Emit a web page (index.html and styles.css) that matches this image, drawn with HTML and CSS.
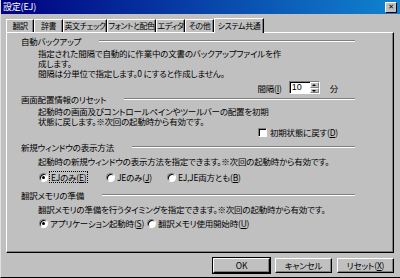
FILE: index.html
```html
<!DOCTYPE html>
<html lang="ja">
<head>
    <meta charset="UTF-8">
    <title>設定(EJ)</title>
    <link rel="stylesheet" href="styles.css">
</head>
<body>
    <div class="ventana">
        <div class="titulo">
            <span class="titulo-texto">設定(EJ)</span>
            <span class="cerrar">&#x2715;</span>
        </div>
        <div class="pestanas">
            <span class="pestana">翻訳</span>
            <span class="pestana">辞書</span>
            <span class="pestana">英文チェック</span>
            <span class="pestana">フォントと配色</span>
            <span class="pestana">エディタ</span>
            <span class="pestana">その他</span>
            <span class="pestana activa">システム共通</span>
        </div>
        <div class="panel">
            <!-- 自動バックアップ -->
            <div class="grupo g1">
                <div class="cabecera"><span>自動バックアップ</span><i class="linea"></i></div>
                <div class="texto t1">指定された間隔で自動的に作業中の文書のバックアップファイルを作<br>成します。<br>間隔は分単位で指定します。0 にすると作成しません。</div>
                <div class="fila-spin">
                    <span>間隔(<u>I</u>)</span>
                    <span class="spin"><span class="spin-valor">10</span><span class="flechas"><b class="arriba"></b><b class="abajo"></b></span></span>
                    <span class="min">分</span>
                </div>
            </div>
            <!-- 画面配置情報のリセット -->
            <div class="grupo g2">
                <div class="cabecera"><span>画面配置情報のリセット</span><i class="linea"></i></div>
                <div class="texto t2">起動時の画面及びコントロールペインやツールバーの配置を初期<br>状態に戻します。※次回の起動時から有効です。</div>
                <div class="fila-check"><span class="check"></span><span>初期状態に戻す(<u>D</u>)</span></div>
            </div>
            <!-- 新規ウィンドウの表示方法 -->
            <div class="grupo g3">
                <div class="cabecera"><span>新規ウィンドウの表示方法</span><i class="linea"></i></div>
                <div class="texto t3">起動時の新規ウィンドウの表示方法を指定できます。※次回の起動時から有効です。</div>
                <div class="radios r3">
                    <label class="radio w1"><span class="punto on"></span><span class="foco">EJのみ(<u>E</u>)</span></label>
                    <label class="radio w2"><span class="punto"></span><span>JEのみ(<u>J</u>)</span></label>
                    <label class="radio"><span class="punto"></span><span>EJ,JE両方とも(<u>B</u>)</span></label>
                </div>
            </div>
            <!-- 翻訳メモリの準備 -->
            <div class="grupo g4">
                <div class="cabecera"><span>翻訳メモリの準備</span><i class="linea"></i></div>
                <div class="texto t4">翻訳メモリの準備を行うタイミングを指定できます。※次回の起動時から有効です。</div>
                <div class="radios r4">
                    <label class="radio w3"><span class="punto on"></span><span>アプリケーション起動時(<u>S</u>)</span></label>
                    <label class="radio"><span class="punto"></span><span>翻訳メモリ使用開始時(<u>U</u>)</span></label>
                </div>
            </div>
        </div>
        <div class="botones">
            <span class="boton">OK</span>
            <span class="boton">キャンセル</span>
            <span class="boton">リセット(<u>X</u>)</span>
        </div>
    </div>
</body>
</html>
```
FILE: styles.css
```css
body {
    margin: 0;
    padding: 0;
    background-color: #c0c0c0;
}
.ventana {
    width: 400px;
    height: 278px;
    box-sizing: border-box;
    border-left: 1px solid #dfdfdf;
    border-bottom: 1px solid #000;
    background-color: #c0c0c0;
    font-family: "Noto Sans CJK JP", sans-serif;
    font-size: 8.5px;
    letter-spacing: -0.2px;
    font-feature-settings: "palt";
    color: #000;
    display: flex;
    flex-direction: column;
}
u {
    text-decoration: underline;
}
/* barra de titulo */
.titulo {
    height: 14px;
    background: linear-gradient(to right, #000080, #1084d0);
    display: flex;
    align-items: center;
    justify-content: space-between;
    padding: 0 3px 0 2px;
}
.titulo-texto {
    color: white;
    font-size: 9px;
    line-height: 12px;
}
.cerrar {
    width: 10px;
    height: 9px;
    background-color: #c0c0c0;
    border-top: 1px solid #fff;
    border-left: 1px solid #fff;
    border-right: 1px solid #000;
    border-bottom: 1px solid #000;
    font-size: 7px;
    line-height: 9px;
    text-align: center;
    font-weight: bold;
    font-family: "DejaVu Sans", sans-serif;
}
/* pestanas */
.pestanas {
    display: flex;
    margin-top: 4px;
    padding-left: 5px;
    height: 14px;
    align-items: flex-end;
}
.pestana {
    box-sizing: border-box;
    height: 13px;
    line-height: 12px;
    font-size: 8px;
    letter-spacing: -0.4px;
    border-top: 1px solid #fff;
    border-left: 1px solid #fff;
    border-right: 1px solid #000;
    box-shadow: inset -1px 0 0 #808080;
    white-space: nowrap;
    text-align: center;
    overflow: hidden;
}
.pestana:nth-child(1) { width: 28px; }
.pestana:nth-child(2) { width: 29px; }
.pestana:nth-child(3) { width: 44px; }
.pestana:nth-child(4) { width: 49px; }
.pestana:nth-child(5) { width: 29px; }
.pestana:nth-child(6) { width: 29px; }
.pestana.activa {
    width: 50px;
    height: 15px;
    line-height: 13px;
    margin-bottom: -1px;
    background-color: #c0c0c0;
    position: relative;
    z-index: 1;
}
/* panel */
.panel {
    margin: 0 6px 0 5px;
    height: 221px;
    box-sizing: border-box;
    border-top: 1px solid #fff;
    border-left: 1px solid #fff;
    border-right: 1px solid #000;
    border-bottom: 1px solid #000;
    box-shadow: inset -1px -1px 0 #808080;
    padding: 3px 38px 0 14px;
}
.cabecera {
    display: flex;
    align-items: center;
    height: 10px;
    line-height: 10px;
    white-space: nowrap;
}
.linea {
    flex: 1;
    margin-left: 18px;
    height: 0;
    border-top: 1px solid #808080;
    border-bottom: 1px solid #fff;
}
.texto {
    padding-left: 17px;
    line-height: 10px;
    white-space: nowrap;
}
.t1 { margin-top: 2px; }
.t2 { margin-top: 2px; }
.t3 { margin-top: 4px; }
.t4 { margin-top: 4px; }
.g2 { margin-top: 0; }
.g3 { margin-top: 5px; }
.g4 { margin-top: 8px; }
/* spin */
.fila-spin {
    display: flex;
    justify-content: flex-end;
    align-items: center;
    height: 13px;
    line-height: 10px;
    margin-top: 3px;
    padding-right: 17px;
}
.spin {
    display: flex;
    width: 31px;
    height: 13px;
    box-sizing: border-box;
    margin-left: 7px;
    background-color: #fff;
    border-top: 1px solid #808080;
    border-left: 1px solid #808080;
    border-right: 1px solid #fff;
    border-bottom: 1px solid #fff;
    box-shadow: inset 1px 1px 0 #000;
}
.spin-valor {
    flex: 1;
    padding-left: 2px;
    line-height: 11px;
    font-family: "Liberation Sans", sans-serif;
    font-size: 9px;
    letter-spacing: 0;
}
.flechas {
    display: flex;
    flex-direction: column;
    width: 9px;
}
.flechas b {
    flex: 1;
    position: relative;
    background-color: #c0c0c0;
    border-top: 1px solid #fff;
    border-left: 1px solid #fff;
    border-right: 1px solid #808080;
    border-bottom: 1px solid #808080;
}
.flechas b::after {
    content: "";
    position: absolute;
    left: 1px;
    top: 1px;
    border-left: 2px solid transparent;
    border-right: 2px solid transparent;
}
.arriba::after {
    border-bottom: 2px solid #000;
}
.abajo::after {
    border-top: 2px solid #000;
}
.min {
    margin-left: 10px;
}
/* check */
.fila-check {
    display: flex;
    align-items: center;
    height: 10px;
    line-height: 10px;
    margin-top: 1px;
    padding-left: 237px;
}
.check {
    width: 9px;
    height: 9px;
    box-sizing: border-box;
    background-color: #fff;
    border-top: 1px solid #808080;
    border-left: 1px solid #808080;
    border-right: 1px solid #fff;
    border-bottom: 1px solid #fff;
    box-shadow: inset 1px 1px 0 #000;
    margin-right: 3px;
}
/* radios */
.radios {
    display: flex;
    padding-left: 18px;
    height: 10px;
    line-height: 10px;
    align-items: center;
}
.r3 { margin-top: 6px; }
.r4 { margin-top: 4px; }
.radio {
    display: flex;
    align-items: center;
    white-space: nowrap;
}
.w1 { width: 67px; }
.w2 { width: 61px; }
.w3 { width: 108px; }
.punto {
    width: 9px;
    height: 9px;
    box-sizing: border-box;
    border-radius: 50%;
    background-color: #fff;
    border: 1px solid;
    border-color: #808080 #fff #fff #808080;
    box-shadow: inset 1px 1px 0 #000;
    margin-right: 2px;
    position: relative;
}
.punto.on::after {
    content: "";
    position: absolute;
    left: 2px;
    top: 2px;
    width: 3px;
    height: 3px;
    border-radius: 50%;
    background-color: #000;
}
.foco {
    outline: 1px dotted #000;
    padding: 0 1px;
}
/* botones */
.botones {
    display: flex;
    justify-content: flex-end;
    margin-top: 5px;
    padding-right: 6px;
}
.boton {
    width: 57px;
    height: 15px;
    box-sizing: border-box;
    margin-left: 5px;
    text-align: center;
    line-height: 12px;
    border-top: 1px solid #fff;
    border-left: 1px solid #fff;
    border-right: 1px solid #000;
    border-bottom: 1px solid #000;
    box-shadow: inset -1px -1px 0 #808080;
}
.boton:first-child {
    outline: 1px solid #000;
}
```
